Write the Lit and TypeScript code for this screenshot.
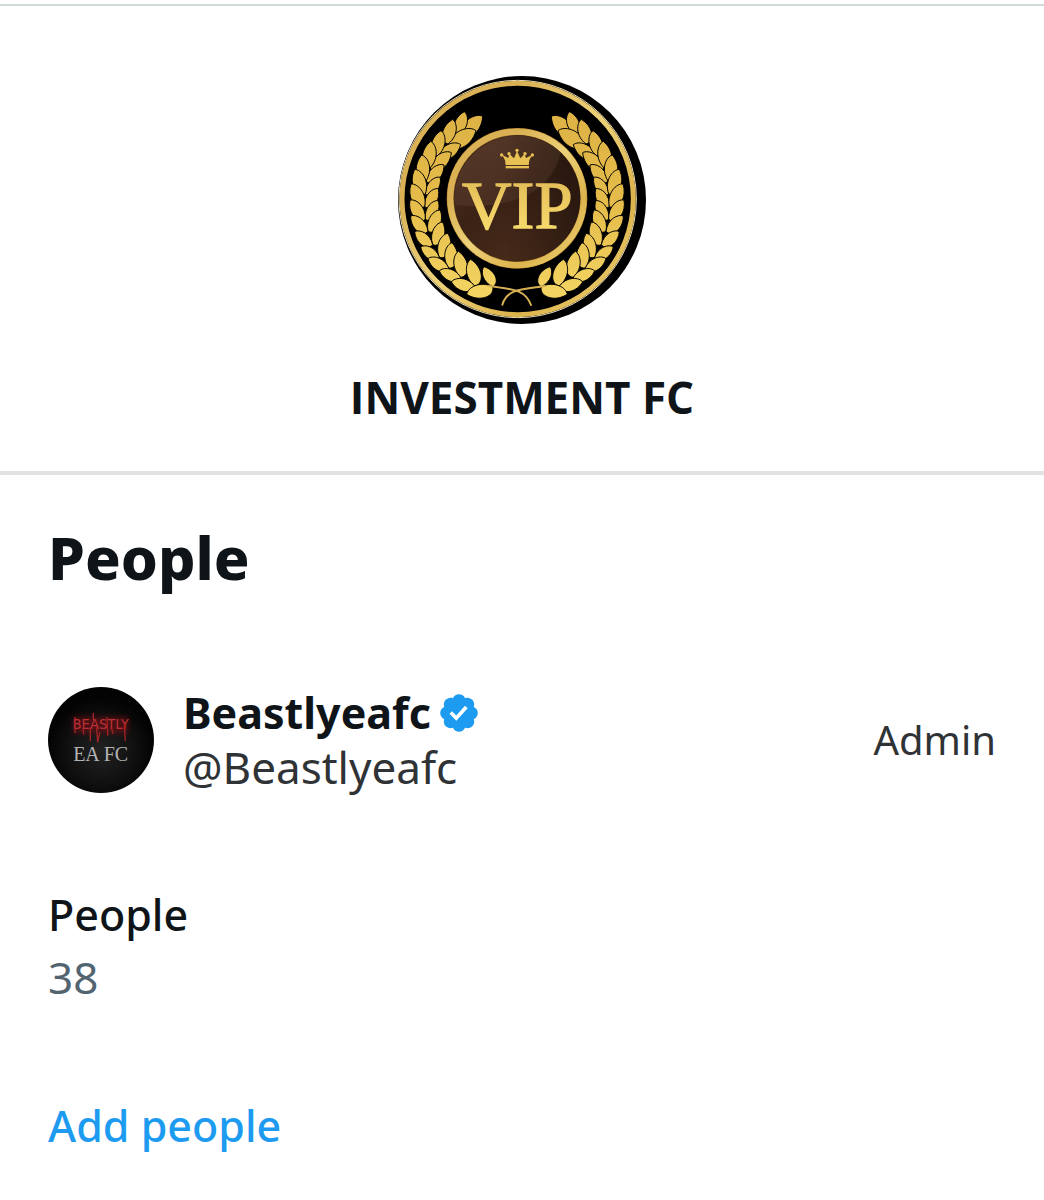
import { LitElement, html, css, svg } from "lit";
import { customElement, property } from "lit/decorators.js";

type Point = [number, number];

/** One pair of laurel leaves: the shared base, the outer tip and the inner tip. */
const LEAF_PAIRS: [Point, Point, Point][] = [
  [[208, 206], [223, 137], [278, 151]],
  [[174, 234], [188, 160], [258, 194]],
  [[142, 270], [153, 194], [212, 236]],
  [[120, 306], [122, 226], [184, 260]],
  [[108, 345], [95, 267], [162, 297]],
  [[106, 384], [74, 310], [151, 334]],
  [[104, 422], [63, 354], [145, 368]],
  [[106, 460], [60, 402], [145, 404]],
  [[114, 496], [62, 450], [151, 432]],
  [[128, 536], [74, 497], [158, 468]],
  [[148, 574], [92, 543], [174, 502]],
  [[176, 606], [114, 578], [186, 530]],
  [[212, 634], [148, 615], [206, 556]],
  [[254, 660], [184, 648], [242, 580]],
  [[308, 662], [230, 685], [282, 602]],
];

function leaf([bx, by]: Point, [tx, ty]: Point, side: number) {
  const dx = tx - bx;
  const dy = ty - by;
  const nx = -dy * side;
  const ny = dx * side;
  const at = (t: number, w: number) =>
    `${(bx + dx * t + nx * w).toFixed(1)} ${(by + dy * t + ny * w).toFixed(1)}`;
  return `M${bx} ${by}C${at(0, 0.36)} ${at(0.62, 0.44)} ${tx} ${ty}C${at(0.9, -0.22)} ${at(0.4, -0.36)} ${bx} ${by}Z`;
}

const laurel = LEAF_PAIRS.map(
  ([base, outer, inner]) => svg`
    <path d=${leaf(base, inner, 1)} />
    <path d=${leaf(base, outer, -1)} />`
);

@customElement("group-emblem")
export class GroupEmblem extends LitElement {
  static styles = css`
    :host {
      display: block;
      width: 248px;
      height: 248px;
    }
    .art {
      display: block;
      width: 100%;
      height: 100%;
    }
    .letters {
      font-family: "Liberation Serif", serif;
      font-size: 206px;
    }
  `;

  render() {
    return html`
      <svg class="art" viewBox="24 30 744 744" role="img" aria-label="VIP group emblem">
        <defs>
          <clipPath id="disc"><circle cx="396" cy="402" r="372" /></clipPath>
          <linearGradient id="ring" x1="0" y1="0" x2="1" y2="1">
            <stop offset="0" stop-color="#dcb455" />
            <stop offset="0.25" stop-color="#d9b054" />
            <stop offset="0.5" stop-color="#edd27a" />
            <stop offset="0.75" stop-color="#dcb34c" />
            <stop offset="1" stop-color="#f0d77a" />
          </linearGradient>
          <linearGradient id="leaves" gradientUnits="userSpaceOnUse" x1="0" y1="130" x2="0" y2="690">
            <stop offset="0" stop-color="#deb246" />
            <stop offset="0.5" stop-color="#e5bc4a" />
            <stop offset="1" stop-color="#f3d463" />
          </linearGradient>
          <linearGradient id="face" x1="0" y1="0" x2="0.6" y2="1">
            <stop offset="0" stop-color="#4b3020" />
            <stop offset="0.55" stop-color="#3a2215" />
            <stop offset="1" stop-color="#4a2c1a" />
          </linearGradient>
          <linearGradient id="shade" x1="0" y1="0" x2="1" y2="0">
            <stop offset="0.4" stop-color="#1c100b" stop-opacity="0" />
            <stop offset="1" stop-color="#1c100b" stop-opacity="0.65" />
          </linearGradient>
          <linearGradient id="gold" gradientUnits="userSpaceOnUse" x1="0" y1="340" x2="0" y2="490">
            <stop offset="0" stop-color="#e3bd58" />
            <stop offset="1" stop-color="#f7da6c" />
          </linearGradient>
        </defs>
        <g clip-path="url(#disc)">
          <rect x="24" y="30" width="744" height="744" fill="#000" />
          <circle cx="383" cy="399" r="356" fill="none" stroke="#e9e0c0" stroke-width="3" />
          <circle cx="383" cy="399" r="347" fill="none" stroke="url(#ring)" stroke-width="15" />
          <g fill="url(#leaves)" stroke="#000" stroke-width="3">
            <g>${laurel}</g>
            <g transform="translate(762 0) scale(-1 1)">${laurel}</g>
          </g>
          <g fill="none" stroke="#d8b154" stroke-width="6" stroke-linecap="round">
            <path d="M296 660C360 670 404 666 423 717" />
            <path d="M464 660C402 670 352 666 337 716" />
          </g>
          <circle cx="381" cy="397" r="211" fill="#b98a34" />
          <circle cx="381" cy="397" r="200" fill="none" stroke="url(#ring)" stroke-width="18" />
          <circle cx="381" cy="397" r="190" fill="url(#face)" />
          <circle cx="381" cy="397" r="190" fill="url(#shade)" />
          <path d="M512 260A190 190 0 0 0 194 418C330 430 480 400 512 260Z" fill="#a47a62" opacity="0.14" />
          <g fill="#e8c155">
            <path d="M345 283L337 267L355 276L358 264L372 277L381 255L391 277L404 264L408 276L426 267L418 283Z" />
            <path d="M345 281H418L416 297H347Z" />
            <rect x="347" y="300" width="70" height="7" />
            <circle cx="335" cy="267" r="5" />
            <circle cx="357" cy="263" r="5" />
            <circle cx="381" cy="253" r="5" />
            <circle cx="405" cy="263" r="5" />
            <circle cx="427" cy="267" r="5" />
          </g>
          <g class="letters" text-anchor="middle">
            <text x="382" y="487" fill="url(#gold)" stroke="url(#gold)" stroke-width="4">VIP</text>
          </g>
        </g>
      </svg>
    `;
  }
}

@customElement("member-avatar")
export class MemberAvatar extends LitElement {
  static styles = css`
    :host {
      display: block;
      flex: none;
      width: 106px;
      height: 106px;
    }
    .art {
      display: block;
      width: 100%;
      height: 100%;
    }
    .scrawl {
      font-family: "DejaVu Sans Condensed", sans-serif;
      font-size: 44px;
    }
    .plain {
      font-family: "Liberation Serif", serif;
      font-size: 60px;
    }
  `;

  render() {
    return html`
      <svg class="art" viewBox="51 51 318 318" role="img" aria-label="Beastly EA FC">
        <defs>
          <radialGradient id="night" cx="0.5" cy="0.6" r="0.5">
            <stop offset="0" stop-color="#222" />
            <stop offset="0.6" stop-color="#111" />
            <stop offset="1" stop-color="#030303" />
          </radialGradient>
          <filter id="glow" x="-20%" y="-40%" width="140%" height="180%">
            <feGaussianBlur stdDeviation="8" />
          </filter>
        </defs>
        <circle cx="210" cy="210" r="159" fill="url(#night)" />
        <rect x="126" y="140" width="166" height="50" fill="#a01015" opacity="0.4" filter="url(#glow)" />
        <text class="scrawl" x="209" y="176" text-anchor="middle" fill="#bb3034">BEASTLY</text>
        <path
          d="M132 142V188M156 176L158 192M178 174V212M197 174L200 217L206 188M228 142L230 196M280 166L283 212M187 130V150M242 176L246 190"
          fill="none" stroke="#a32226" stroke-width="4" stroke-linecap="round" />
        <text class="plain" x="209" y="274" text-anchor="middle" fill="#b4b4b4">EA FC</text>
      </svg>
    `;
  }
}

@customElement("verified-badge")
export class VerifiedBadge extends LitElement {
  static styles = css`
    :host {
      display: block;
      flex: none;
      width: 44px;
      height: 44px;
    }
    .art {
      display: block;
      width: 100%;
      height: 100%;
      fill: #1d9bf0;
    }
  `;

  render() {
    return html`
      <svg class="art" viewBox="0 0 22 22" role="img" aria-label="Verified account">
        <path
          d="M20.396 11c-.018-.646-.215-1.275-.57-1.816-.354-.54-.852-.972-1.438-1.246.223-.607.27-1.264.14-1.897-.131-.634-.437-1.218-.882-1.687-.47-.445-1.053-.75-1.687-.882-.633-.13-1.29-.083-1.897.14-.273-.587-.704-1.086-1.245-1.44S11.647 1.62 11 1.604c-.646.017-1.273.213-1.813.568s-.969.854-1.24 1.44c-.608-.223-1.267-.272-1.902-.14-.635.13-1.22.436-1.69.882-.445.47-.749 1.055-.878 1.688-.13.633-.08 1.29.144 1.896-.587.274-1.087.705-1.443 1.245-.356.54-.555 1.17-.574 1.817.02.647.218 1.276.574 1.817.356.54.856.972 1.443 1.245-.224.606-.274 1.263-.144 1.896.13.634.433 1.218.877 1.688.47.443 1.054.747 1.687.878.633.132 1.29.084 1.897-.136.274.586.705 1.084 1.246 1.439.54.354 1.17.551 1.816.569.647-.016 1.276-.213 1.817-.567s.972-.854 1.245-1.44c.604.239 1.266.296 1.903.164.636-.132 1.22-.447 1.68-.907.46-.46.776-1.044.908-1.681s.075-1.299-.165-1.903c.586-.274 1.084-.705 1.439-1.246.354-.54.551-1.17.569-1.816zM9.662 14.85l-3.429-3.428 1.293-1.302 2.072 2.072 4.4-4.794 1.347 1.246z" />
      </svg>
    `;
  }
}

@customElement("app-root")
export class AppRoot extends LitElement {
  @property() groupName = "INVESTMENT FC";
  @property({ type: Number }) memberCount = 38;

  static styles = css`
    :host {
      display: block;
      min-height: 100vh;
      padding-top: 4px;
      box-sizing: border-box;
      background: #fff;
      color: #0f1419;
      font-family: "Noto Sans", "Open Sans", sans-serif;
      font-size: 44px;
      line-height: 54px;
    }
    .header {
      display: flex;
      flex-direction: column;
      align-items: center;
      gap: 46px;
      padding: 70px 48px 47px;
      border-top: 2px solid #d0dad9;
      border-bottom: 4px solid #e1e2e2;
    }
    .group-name {
      margin: 0;
      font-family: "Open Sans", "Noto Sans", sans-serif;
      font-size: 44px;
      font-weight: 700;
    }
    .people {
      padding: 46px 48px;
    }
    .title {
      margin: 0;
      font-size: 59px;
      line-height: 72px;
      font-weight: 800;
    }
    .member {
      display: flex;
      align-items: center;
      gap: 29px;
      margin-top: 93px;
      color: #2f3336;
    }
    .identity {
      flex: 1;
      min-width: 0;
    }
    .name-row {
      display: flex;
      align-items: center;
      gap: 6px;
    }
    .name {
      color: #0f1419;
      font-size: 43px;
      font-weight: 700;
    }
    .role {
      font-size: 40px;
    }
    .count {
      display: flex;
      flex-direction: column;
      gap: 8px;
      margin: 94px 0 0;
    }
    .label {
      font-size: 43px;
      font-weight: 500;
    }
    .value {
      margin: 0;
      color: #536471;
    }
    .add {
      display: block;
      margin-top: 95px;
      padding: 0;
      border: 0;
      background: none;
      color: #1d9bf0;
      font: inherit;
      font-size: 43px;
      font-weight: 500;
      cursor: pointer;
    }
  `;

  render() {
    return html`
      <header class="header">
        <group-emblem></group-emblem>
        <h1 class="group-name">${this.groupName}</h1>
      </header>
      <main class="people">
        <h2 class="title">People</h2>
        <div class="member">
          <member-avatar></member-avatar>
          <div class="identity">
            <div class="name-row">
              <span class="name">Beastlyeafc</span>
              <verified-badge></verified-badge>
            </div>
            <div class="handle">@Beastlyeafc</div>
          </div>
          <span class="role">Admin</span>
        </div>
        <dl class="count">
          <dt class="label">People</dt>
          <dd class="value">${this.memberCount}</dd>
        </dl>
        <button class="add" type="button">Add people</button>
      </main>
    `;
  }
}
